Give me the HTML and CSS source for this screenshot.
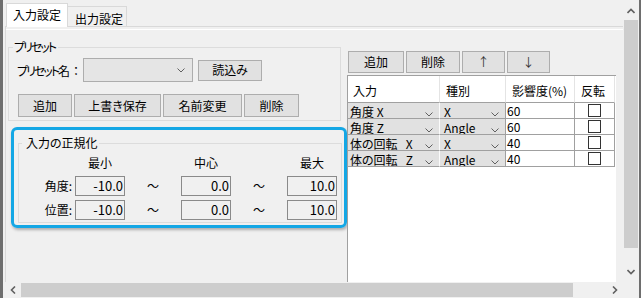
FILE: index.html
```html
<!DOCTYPE html>
<html lang="ja">
<head>
<meta charset="utf-8">
<title>入力設定</title>
<link rel="stylesheet" href="styles.css">
</head>
<body>
<div class="window">
  <div class="main">
    <div class="viewport">
      <div class="tabs">
        <div class="tab active">入力設定</div>
        <div class="tab">出力設定</div>
      </div>
      <div class="page">
        <div class="page-inner">
          <div class="left">
            <fieldset class="group preset">
              <legend><span class="kana">プリセット</span></legend>
              <div class="preset-row">
                <span class="preset-label"><span class="kana">プリセット</span>名<span class="colon">：</span></span>
                <div class="combo"><svg class="chev" width="8" height="5" viewBox="0 0 8 5"><polyline points="0.5,0.5 4,4 7.5,0.5" fill="none" stroke="#606060" stroke-width="1"/></svg></div>
                <button class="btn btn-load">読込み</button>
              </div>
              <div class="preset-actions">
                <button class="btn w-add">追加</button>
                <button class="btn w-save">上書き保存</button>
                <button class="btn w-rename">名前変更</button>
                <button class="btn w-del">削除</button>
              </div>
            </fieldset>
            <div class="highlight">
              <fieldset class="group norm">
                <legend>入力の正規化</legend>
                <div class="norm-grid">
                  <span></span><span class="head">最小</span><span></span><span class="head">中心</span><span></span><span class="head">最大</span>
                  <span class="label">角度:</span><span class="field">-10.0</span><span class="tilde">～</span><span class="field">0.0</span><span class="tilde">～</span><span class="field">10.0</span>
                  <span class="label">位置:</span><span class="field">-10.0</span><span class="tilde">～</span><span class="field">0.0</span><span class="tilde">～</span><span class="field">10.0</span>
                </div>
              </fieldset>
            </div>
          </div>
          <div class="right">
            <div class="toolbar">
              <button class="btn t-add">追加</button>
              <button class="btn t-del">削除</button>
              <button class="btn t-arrow">↑</button>
              <button class="btn t-arrow">↓</button>
            </div>
            <div class="grid">
              <div class="gh">入力</div>
              <div class="gh gh2">種別</div>
              <div class="gh gh2">影響度(%)</div>
              <div class="gh gh2">反転</div>

              <div class="gc c1"><span>角度 X</span><svg class="chev" width="8" height="5" viewBox="0 0 8 5"><polyline points="0.5,0.5 4,4 7.5,0.5" fill="none" stroke="#606060"/></svg></div>
              <div class="gc c2"><span>X</span><svg class="chev" width="8" height="5" viewBox="0 0 8 5"><polyline points="0.5,0.5 4,4 7.5,0.5" fill="none" stroke="#606060"/></svg></div>
              <div class="gn">60</div>
              <div class="gk"><span class="check"></span></div>

              <div class="gc c1"><span>角度 Z</span><svg class="chev" width="8" height="5" viewBox="0 0 8 5"><polyline points="0.5,0.5 4,4 7.5,0.5" fill="none" stroke="#606060"/></svg></div>
              <div class="gc c2"><span>Angle</span><svg class="chev" width="8" height="5" viewBox="0 0 8 5"><polyline points="0.5,0.5 4,4 7.5,0.5" fill="none" stroke="#606060"/></svg></div>
              <div class="gn">60</div>
              <div class="gk"><span class="check"></span></div>

              <div class="gc c1"><span>体の回転&nbsp;&nbsp;&nbsp;X</span><svg class="chev" width="8" height="5" viewBox="0 0 8 5"><polyline points="0.5,0.5 4,4 7.5,0.5" fill="none" stroke="#606060"/></svg></div>
              <div class="gc c2"><span>X</span><svg class="chev" width="8" height="5" viewBox="0 0 8 5"><polyline points="0.5,0.5 4,4 7.5,0.5" fill="none" stroke="#606060"/></svg></div>
              <div class="gn">40</div>
              <div class="gk"><span class="check"></span></div>

              <div class="gc c1"><span>体の回転&nbsp;&nbsp;&nbsp;Z</span><svg class="chev" width="8" height="5" viewBox="0 0 8 5"><polyline points="0.5,0.5 4,4 7.5,0.5" fill="none" stroke="#606060"/></svg></div>
              <div class="gc c2"><span>Angle</span><svg class="chev" width="8" height="5" viewBox="0 0 8 5"><polyline points="0.5,0.5 4,4 7.5,0.5" fill="none" stroke="#606060"/></svg></div>
              <div class="gn">40</div>
              <div class="gk"><span class="check"></span></div>
            </div>
          </div>
        </div>
      </div>
    </div>
    <div class="hscroll">
      <div class="sb-btn hb"><svg width="6" height="8" viewBox="0 0 6 8"><polyline points="5,0.5 1.5,4 5,7.5" fill="none" stroke="#606060" stroke-width="1.6"/></svg></div>
      <div class="h-thumb"></div>
      <div class="h-track"></div>
      <div class="sb-btn hb"><svg width="6" height="8" viewBox="0 0 6 8"><polyline points="1,0.5 4.5,4 1,7.5" fill="none" stroke="#606060" stroke-width="1.6"/></svg></div>
    </div>
  </div>
  <div class="vscroll">
    <div class="sb-btn v-up"><svg width="8" height="6" viewBox="0 0 8 6"><polyline points="0.5,5 4,1.5 7.5,5" fill="none" stroke="#606060" stroke-width="1.6"/></svg></div>
    <div class="v-thumb"></div>
    <div class="v-track"></div>
    <div class="sb-btn v-down"><svg width="8" height="6" viewBox="0 0 8 6"><polyline points="0.5,1 4,4.5 7.5,1" fill="none" stroke="#606060" stroke-width="1.6"/></svg></div>
    <div class="corner"></div>
  </div>
</div>
</body>
</html>
```

FILE: styles.css
```css
* { box-sizing: border-box; }
html, body { margin: 0; padding: 0; }
body {
  font-family: "Noto Sans CJK JP", "Noto Sans", sans-serif;
  font-size: 12px;
  font-feature-settings: "palt" 1;
  color: #000;
  background: #f0f0f0;
}

.window {
  width: 641px;
  height: 298px;
  display: flex;
  border-left: 3px solid #6e6e6e;
  border-right: 2px solid #6e6e6e;
  background: #f0f0f0;
  overflow: hidden;
}
.main {
  width: 620px;
  padding-left: 1px;
  display: flex;
  flex-direction: column;
}
.viewport {
  height: 282px;
  overflow: hidden;
}

/* tabs */
.tabs {
  display: flex;
  align-items: flex-end;
  height: 26px;
  padding-left: 2px;
  position: relative;
  z-index: 1;
}
.tab {
  height: 20px;
  padding: 5px 3px 0 7px;
  line-height: 14px;
  border: 1px solid #d9d9d9;
  border-bottom: none;
  border-left: none;
  background: #f0f0f0;
  white-space: nowrap;
}
.tab.active {
  height: 24px;
  margin-bottom: -1px;
  padding: 4px 6px 0 6px;
  background: #fff;
  border-left: 1px solid #d9d9d9;
}
.page {
  margin-left: 1px;
  height: 300px;
  border-top: 1px solid #d9d9d9;
  border-left: 1px solid #d9d9d9;
}
.page-inner {
  margin-top: 2px;
  border-top: 1px solid #fff;
  padding-left: 1px;
  display: flex;
}

.kana { letter-spacing: -2px; }
.colon { font-feature-settings: normal; }

/* group boxes */
.group {
  margin: 0;
  padding: 0;
  min-width: 0;
  border: 1px solid #dcdcdc;
}
.group legend {
  line-height: 14px;
  font-size: 12px;
}
.left { width: 340px; flex-shrink: 0; }
.preset {
  width: 333px;
  margin: 10px 0 0 1px;
  padding-bottom: 3px;
}
.preset legend {
  margin-left: 4px;
  padding: 0 3px 0 1px;
}
.preset-row {
  display: flex;
  align-items: center;
  height: 24px;
  margin: 4px 0 0 8px;
}
.preset-label {
  width: 66px;
  flex-shrink: 0;
  white-space: nowrap;
  overflow: hidden;
}
.combo {
  width: 110px;
  height: 24px;
  border: 1px solid #adadad;
  background: #e5e5e5;
  display: flex;
  align-items: center;
  justify-content: flex-end;
  padding-right: 7px;
}
.btn {
  font: inherit;
  font-feature-settings: "palt" 1;
  margin: 0;
  padding: 0;
  background: #e1e1e1;
  border: 1px solid #adadad;
  color: #000;
  line-height: 14px;
}
.btn-load { width: 64px; height: 21px; margin-left: 5px; }
.preset-actions {
  display: flex;
  gap: 2px;
  margin: 12px 0 0 9px;
}
.preset-actions .btn { height: 23px; }
.w-add { width: 54px; }
.w-save { width: 87px; }
.w-rename { width: 79px; }
.w-del { width: 55px; }

/* highlight around normalization group */
.highlight {
  width: 336px;
  margin: 6px 0 0 4px;
  border: 3px solid #14a7e5;
  border-radius: 6px;
  padding: 6px 2px 2px 4px;
  box-shadow: 1px 2px 3px rgba(0, 0, 0, 0.28);
}
.norm {
  width: 324px;
  padding-bottom: 2px;
}
.norm legend {
  margin-left: 3px;
  padding: 0 1px 0 4px;
}
.norm-grid {
  display: grid;
  grid-template-columns: 56px 50px 56px 50px 56px 50px;
  grid-template-rows: 20px 20px 20px;
  row-gap: 4px;
  margin-top: 2px;
}
.norm-grid .head {
  text-align: center;
  line-height: 14px;
  padding-top: 4px;
}
.norm-grid .label {
  text-align: right;
  padding-right: 3px;
  line-height: 20px;
}
.norm-grid .tilde {
  text-align: center;
  line-height: 20px;
}
.norm-grid .field {
  border: 1px solid #8a8a8a;
  background: #f0f0f0;
  text-align: right;
  padding-right: 1px;
  font-size: 13px;
  line-height: 18px;
}

/* right side */
.right { width: 269px; flex-shrink: 0; }
.toolbar {
  display: flex;
  gap: 2px;
  margin: 21px 0 0 1px;
}
.toolbar .btn { height: 22px; }
.t-add { width: 56px; }
.t-del { width: 54px; }
.t-arrow { width: 43px; color: #333; }

.grid {
  margin-top: 2px;
  height: 220px;
  border-left: 1px solid #a0a0a0;
  border-top: 1px solid #a0a0a0;
  background: #fff;
  display: grid;
  grid-template-columns: 92px 66px 69px 40px;
  grid-template-rows: 27px;
  grid-auto-rows: 16px;
  align-content: start;
}
.gh {
  border-bottom: 1px solid #a0a0a0;
  border-right: 1px solid #e4e4e4;
  padding: 8px 0 0 5px;
  line-height: 14px;
  white-space: nowrap;
}
.gh2 { padding-left: 6px; }
.gc {
  background: #e1e1e1;
  border-bottom: 1px solid #a0a0a0;
  display: flex;
  justify-content: space-between;
  align-items: flex-start;
  line-height: 15px;
  overflow: hidden;
  white-space: nowrap;
}
.gc span { margin-top: 1px; }
.gc .chev { margin: 9px 6px 0 0; flex-shrink: 0; }
.gc.c1 { border-right: 1px solid #fbfbfb; padding-left: 2px; }
.gc.c2 { border-right: 1px solid #a0a0a0; padding-left: 4px; }
.gn {
  border-bottom: 1px solid #a0a0a0;
  border-right: 1px solid #a0a0a0;
  padding-left: 1px;
  line-height: 15px;
  overflow: hidden;
}
.gk {
  border-bottom: 1px solid #a0a0a0;
  border-right: 1px solid #a0a0a0;
  display: flex;
  justify-content: center;
  align-items: flex-start;
  padding-top: 1px;
}
.check {
  width: 13px;
  height: 13px;
  border: 1px solid #333;
  background: #fff;
}

/* scrollbars */
.hscroll {
  height: 16px;
  display: flex;
  background: #f0f0f0;
}
.sb-btn {
  display: flex;
  align-items: center;
  justify-content: center;
  flex-shrink: 0;
}
.hb { width: 17px; }
.h-thumb {
  width: 552px;
  margin: 1px 0;
  background: #cdcdcd;
}
.h-track { flex: 1; }
.vscroll {
  width: 16px;
  display: flex;
  flex-direction: column;
  background: #f0f0f0;
}
.v-up { height: 20px; align-items: flex-start; padding-top: 8px; }
.v-thumb {
  height: 228px;
  margin: 0 1px;
  background: #cdcdcd;
}
.v-track { height: 16px; }
.v-down { height: 18px; align-items: flex-start; padding-top: 5px; }
.corner { flex: 1; }
```
